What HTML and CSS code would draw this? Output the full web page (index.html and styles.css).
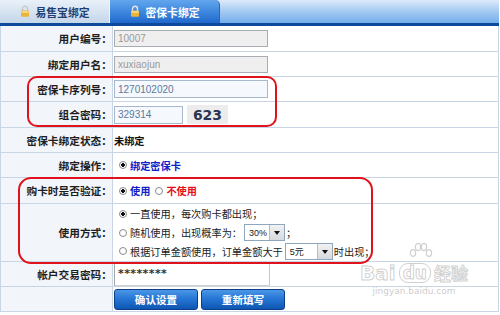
FILE: index.html
```html
<!DOCTYPE html>
<html lang="zh-CN">
<head>
<meta charset="utf-8">
<title>密保卡绑定</title>
<link rel="stylesheet" href="styles.css">
</head>
<body>
<div class="page">
  <div class="tabs">
    <div class="tab">
      <svg class="lock" viewBox="0 0 10 12" width="10" height="12"><path d="M2.5 6V3.8a2.5 2.5 0 0 1 5 0V6" fill="none" stroke="#c9c9c9" stroke-width="1.4"/><rect x="1" y="5.5" width="8" height="6.3" rx="1" fill="#e8b43c"/><rect x="1.5" y="6" width="7" height="2" fill="#f7d77a"/></svg>
      <span>易售宝绑定</span>
    </div>
    <div class="tab active">
      <svg class="lock" viewBox="0 0 10 12" width="10" height="12"><path d="M2.5 6V3.8a2.5 2.5 0 0 1 5 0V6" fill="none" stroke="#e6e6e6" stroke-width="1.4"/><rect x="1" y="5.5" width="8" height="6.3" rx="1" fill="#e8b43c"/><rect x="1.5" y="6" width="7" height="2" fill="#f7d77a"/></svg>
      <span>密保卡绑定</span>
    </div>
  </div>

  <div class="row h26">
    <div class="lbl">用户编号：</div>
    <div class="val"><span class="inp dis w154">10007</span></div>
  </div>
  <div class="row h25">
    <div class="lbl">绑定用户名：</div>
    <div class="val"><span class="inp dis w154">xuxiaojun</span></div>
  </div>
  <div class="row h25">
    <div class="lbl">密保卡序列号：</div>
    <div class="val"><span class="inp blue w154">1270102020</span></div>
  </div>
  <div class="row h26">
    <div class="lbl">组合密码：</div>
    <div class="val"><span class="inp blue w69">329314</span><span class="code">623</span></div>
  </div>
  <div class="row h25">
    <div class="lbl">密保卡绑定状态：</div>
    <div class="val"><b class="status">未绑定</b></div>
  </div>
  <div class="row h25">
    <div class="lbl">绑定操作：</div>
    <div class="val"><span class="rd on"></span><b class="link">绑定密保卡</b></div>
  </div>
  <div class="row h26">
    <div class="lbl">购卡时是否验证：</div>
    <div class="val"><span class="rd on"></span><b class="link">使用</b><span class="rd"></span><b class="no">不使用</b></div>
  </div>
  <div class="row h58">
    <div class="lbl">使用方式：</div>
    <div class="val lines">
      <div class="line"><span class="rd on"></span>一直使用，每次购卡都出现；</div>
      <div class="line"><span class="rd"></span>随机使用，出现概率为：<span class="sel w41"><span class="sv">30%</span><span class="sb"></span></span>；</div>
      <div class="line"><span class="rd"></span>根据订单金额使用，订单金额大于<span class="sel w48"><span class="sv">5元</span><span class="sb"></span></span>时出现；</div>
    </div>
  </div>
  <div class="row h25">
    <div class="lbl">帐户交易密码：</div>
    <div class="val"><span class="inp pwd">********</span></div>
  </div>
  <div class="row h25">
    <div class="lbl"></div>
    <div class="val top"><span class="btn">确认设置</span><span class="btn">重新填写</span></div>
  </div>

  <div class="mark mark1"></div>
  <div class="mark mark2"></div>

  <div class="wm">
    <svg class="paw" viewBox="0 0 26 22" width="26" height="22"><g fill="rgba(255,255,255,0.55)" stroke="rgba(150,150,150,0.45)" stroke-width="1.2"><ellipse cx="5" cy="11" rx="2.6" ry="3.4"/><ellipse cx="10" cy="5" rx="2.6" ry="3.6"/><ellipse cx="16" cy="5" rx="2.6" ry="3.6"/><ellipse cx="21" cy="11" rx="2.6" ry="3.4"/></g></svg>
    <div class="wmt"><span>Bai</span><span class="du">du</span><span>经验</span></div>
    <div class="wmu">jingyan.baidu.com</div>
  </div>
</div>
</body>
</html>
```
FILE: styles.css
```css
html, body { margin: 0; padding: 0; background: #fff; }
body { font-family: "Noto Sans CJK SC", "Liberation Sans", sans-serif; color: #222; }
.page { position: relative; width: 500px; height: 315px; overflow: hidden; background: #fff; }

.tabs {
  display: flex; height: 26px; box-sizing: border-box; width: 499px;
  background: linear-gradient(#dceafa 0%, #a9cdf3 45%, #73adeb 100%);
  border-bottom: 3px solid #0d4a9c;
}
.tab {
  width: 110px; height: 23px; display: flex; align-items: center; justify-content: center; gap: 6px;
  font-weight: bold; font-size: 10.8px; color: #1e3f72;
  background: linear-gradient(#e9f0f8, #c4d6ea);
  border-right: 1px solid #eef4fb; box-sizing: border-box;
}
.tab.active {
  width: 110px; color: #fff; border-right: 1px solid #2c64b6;
  background: linear-gradient(#62a6ec 0%, #3f88de 50%, #2069cc 100%);
  border-top-right-radius: 5px;
}
.tab .lock { margin-top: -2px; }

.row { display: grid; grid-template-columns: 112px 1fr; box-sizing: border-box; width: 499px;
  border-bottom: 1px solid #c8d5e5; border-left: 1px solid #c8d5e5; border-right: 1px solid #c8d5e5; }
.h25 { height: 25px; } .h26 { height: 26px; } .h58 { height: 58px; }
.lbl { background: #f2f5fa; border-right: 1px solid #c8d5e5; display: flex; align-items: center; justify-content: flex-end;
  font-weight: bold; font-size: 10.7px; color: #1e1e1e; padding-right: 0; }
.val { display: flex; align-items: center; padding-left: 1px; font-size: 10.2px; color: #222; }
.val.top { align-items: flex-start; padding-top: 2px; gap: 3px; }

.inp { display: inline-flex; align-items: center; box-sizing: border-box; height: 18px; padding: 0 3px;
  font-family: "Liberation Sans", Arial, sans-serif; font-size: 10px; }
.dis { background: #efefef; border: 1px solid #a8adb4; color: #9a9a9a; height: 17px; }
.blue { background: #f5f8fc; border: 1px solid #a6b8ce; color: #5b78a0; }
.w154 { width: 154px; } .w69 { width: 69px; }
.pwd { width: 156px; height: 23px; background: #fff; border: 1px solid #a4a4a4; border-right-color: #c8c8c8; border-bottom-color: #d0d0d0;
  align-items: flex-start; padding-top: 3px; font-family: "DejaVu Sans", sans-serif; font-size: 11px; font-weight: bold; color: #333; letter-spacing: 0.4px; }
.code { display: inline-flex; align-items: center; justify-content: center; width: 41px; height: 19px; margin-left: 4px;
  background: #ececec; font-family: "DejaVu Sans", sans-serif; font-weight: bold; font-size: 14px; color: #2a3452; }

.status { font-weight: bold; color: #111; }
.link { font-weight: bold; color: #1020c8; }
.no { font-weight: bold; color: #e8101a; }

.rd { display: inline-block; width: 8px; height: 8px; box-sizing: border-box; border: 1px solid #8a8a8a; border-radius: 50%;
  background: #fff; margin: 0 3px 0 5px; }
.rd.on { background: radial-gradient(circle, #111 0 1.6px, #fff 2px); }

.lines { flex-direction: column; align-items: flex-start; justify-content: center; }
.line { display: flex; align-items: center; height: 18.6px; }
.sel { display: inline-flex; box-sizing: border-box; height: 17px; border: 1px solid #8fa6bf; background: #fff; margin: 0 1px 0 2px; }
.w41 { width: 41px; } .w48 { width: 48px; }
.sv { flex: 1; display: flex; align-items: center; padding-left: 4px; font-family: "Liberation Sans", sans-serif; font-size: 9px; color: #222; }
.sel .sv { font-family: "Liberation Sans", "Noto Sans CJK SC", sans-serif; }
.sb { width: 14px; position: relative; background: linear-gradient(#f2f2f2, #d6d9de); border-left: 1px solid #b4bcc6; }
.sb::after { content: ""; position: absolute; left: 4px; top: 6px; border-left: 3px solid transparent; border-right: 3px solid transparent; border-top: 4px solid #111; }

.btn { display: inline-flex; align-items: center; justify-content: center; width: 84px; height: 21px; box-sizing: border-box;
  border: 1px solid #0b3f8a; border-radius: 3px; background: linear-gradient(#4b97e6 0%, #2677d6 45%, #0e56b2 100%);
  color: #fff; font-weight: bold; font-size: 10.6px; }

.mark { position: absolute; border: 2px solid #e0121c; box-sizing: border-box; }
.mark1 { left: 27px; top: 76px; width: 250px; height: 51px; border-radius: 10px; }
.mark2 { left: 18px; top: 177px; width: 355px; height: 87px; border-radius: 13px; }

.wm { position: absolute; left: 354px; top: 242px; width: 120px; display: flex; flex-direction: column; align-items: center; }
.paw { margin-left: 14px; }
.wmt { display: flex; align-items: center; gap: 3px; margin-top: -2px; font-family: "DejaVu Sans", sans-serif; font-weight: bold; font-size: 20px;
  color: rgba(255,255,255,0.55); -webkit-text-stroke: 1px rgba(150,150,150,0.45); line-height: 22px; }
.wmt .du { font-size: 17px; border: 1.5px solid rgba(150,150,150,0.45); border-radius: 9px; padding: 0 3px; line-height: 18px; }
.wmt span:last-child { font-family: "Noto Sans CJK SC", sans-serif; font-size: 17px; }
.wmu { font-family: "DejaVu Sans", sans-serif; font-size: 9px; color: rgba(150,150,150,0.5); margin-top: 2px; }
```
